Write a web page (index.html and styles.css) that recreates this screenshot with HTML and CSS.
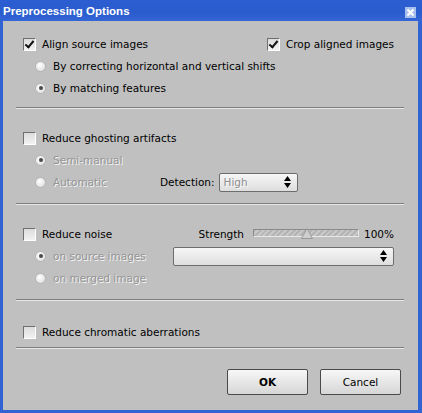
FILE: index.html
```html
<!DOCTYPE html>
<html>

<head>
    <title>Preprocessing Options</title>
    <link rel="stylesheet" href="styles.css">
</head>

<body>
    <div class="window">
        <div class="titlebar">
            <span class="title">Preprocessing Options</span>
            <span class="close">
                <svg width="11" height="11" viewBox="0 0 11 11">
                    <path d="M2.5 2.5 L8.5 8.5 M8.5 2.5 L2.5 8.5" stroke="#fff" stroke-width="2" />
                </svg>
            </span>
        </div>

        <div class="content">
            <!-- align -->
            <div class="section sec-align">
                <div class="row split">
                    <div class="opt"><span class="check checked"></span>Align source images</div>
                    <div class="opt"><span class="check checked"></span>Crop aligned images</div>
                </div>
                <div class="row sub">
                    <div class="opt"><span class="radio"></span>By correcting horizontal and vertical shifts</div>
                </div>
                <div class="row sub">
                    <div class="opt"><span class="radio on"></span>By matching features</div>
                </div>
            </div>
            <div class="sep"></div>

            <!-- ghosting -->
            <div class="section sec-ghost">
                <div class="row">
                    <div class="opt"><span class="check"></span>Reduce ghosting artifacts</div>
                </div>
                <div class="row sub">
                    <div class="opt disabled"><span class="radio on"></span>Semi-manual</div>
                </div>
                <div class="row sub">
                    <div class="opt disabled col-auto"><span class="radio"></span>Automatic</div>
                    <span class="lbl">Detection:</span>
                    <div class="select sel-small">
                        <span class="sel-text">High</span>
                        <svg class="arrows" width="7" height="12" viewBox="0 0 7 12">
                            <path d="M3.5 0 L7 5 L0 5 Z M0 7 L7 7 L3.5 12 Z" fill="#000" />
                        </svg>
                    </div>
                </div>
            </div>
            <div class="sep"></div>

            <!-- noise -->
            <div class="section sec-noise">
                <div class="row">
                    <div class="opt col-noise"><span class="check"></span>Reduce noise</div>
                    <span class="lbl">Strength</span>
                    <div class="slider">
                        <div class="track"></div>
                        <svg class="thumb" width="12" height="11" viewBox="0 0 12 11">
                            <path d="M6 0.5 L11.5 10.5 L0.5 10.5 Z" fill="#cfcfcf" stroke="#9a9a9a" />
                        </svg>
                    </div>
                    <span class="pct">100%</span>
                </div>
                <div class="row sub">
                    <div class="opt disabled col-source"><span class="radio on"></span>on source images</div>
                    <div class="select sel-wide">
                        <span class="sel-text"></span>
                        <svg class="arrows" width="7" height="12" viewBox="0 0 7 12">
                            <path d="M3.5 0 L7 5 L0 5 Z M0 7 L7 7 L3.5 12 Z" fill="#000" />
                        </svg>
                    </div>
                </div>
                <div class="row sub">
                    <div class="opt disabled"><span class="radio"></span>on merged image</div>
                </div>
            </div>
            <div class="sep"></div>

            <!-- chromatic -->
            <div class="section sec-chrom">
                <div class="row">
                    <div class="opt"><span class="check"></span>Reduce chromatic aberrations</div>
                </div>
            </div>
            <div class="sep"></div>

            <div class="buttons">
                <button class="btn btn-ok">OK</button>
                <button class="btn">Cancel</button>
            </div>
        </div>
    </div>
</body>

</html>
```

FILE: styles.css
```css
body {
    margin: 0;
    padding: 0;
    font-family: "DejaVu Sans", sans-serif;
    font-size: 10.5px;
    color: #000;
}

.window {
    width: 422px;
    height: 413px;
    box-sizing: border-box;
    background-color: #c0c0c0;
    border-left: 3px solid #3163d3;
    border-right: 4px solid #3163d3;
    border-bottom: 3px solid #3163d3;
    display: flex;
    flex-direction: column;
}

.titlebar {
    height: 21px;
    margin-left: -3px;
    margin-right: -4px;
    padding: 0 6px 0 3px;
    background: linear-gradient(#2c5ed2, #2a5ccd 60%, #3466d8);
    display: flex;
    align-items: center;
    justify-content: space-between;
}

.title {
    font-family: "Liberation Sans", sans-serif;
    font-weight: bold;
    font-size: 11.5px;
    color: #fff;
}

.close {
    width: 11px;
    height: 11px;
    margin-top: 3px;
    background-color: #a7bfec;
    display: flex;
}

.content {
    padding: 0 14px 0 13px;
    display: flex;
    flex-direction: column;
}

.section {
    padding-left: 7px;
    padding-right: 10px;
}

.sec-align {
    padding-top: 12px;
    padding-bottom: 8px;
}

.sec-ghost {
    padding-top: 18px;
    padding-bottom: 10px;
}

.sec-noise {
    padding-top: 18px;
    padding-bottom: 10px;
}

.sec-chrom {
    padding-top: 20px;
    padding-bottom: 4px;
}

.sep {
    height: 0;
    border-top: 1px solid #7d7d7d;
    border-bottom: 1px solid #e6e6e6;
}

.row {
    height: 22px;
    display: flex;
    align-items: center;
}

.row.split {
    justify-content: space-between;
}

.row.sub {
    padding-left: 12px;
}

.opt {
    display: flex;
    align-items: center;
    white-space: nowrap;
}

.opt.disabled {
    color: #959595;
    text-shadow: 1px 1px 0 #f4f4f4;
}

.col-auto {
    width: 125px;
}

.col-noise {
    width: 179px;
}

.col-source {
    width: 138px;
}

.check {
    width: 11px;
    height: 11px;
    margin-right: 6px;
    border: 1px solid #6f6f6f;
    border-right-color: #fff;
    border-bottom-color: #fff;
    background: linear-gradient(#dcdcdc, #f2f2f2);
    position: relative;
}

.check.checked::after {
    content: "";
    position: absolute;
    left: 3px;
    top: 0px;
    width: 3px;
    height: 7px;
    border-right: 2px solid #111;
    border-bottom: 2px solid #111;
    transform: rotate(40deg);
}

.radio {
    width: 9px;
    height: 9px;
    margin-right: 7px;
    border-radius: 50%;
    border: 1px solid #b4b4b4;
    background: radial-gradient(circle at 40% 35%, #ffffff, #d8d8d8);
    display: flex;
    align-items: center;
    justify-content: center;
}

.radio.on::after {
    content: "";
    width: 4px;
    height: 4px;
    border-radius: 50%;
    background-color: #4a4a4a;
}

.lbl {
    white-space: nowrap;
}

.select {
    box-sizing: border-box;
    height: 19px;
    border: 1px solid #6d6d6d;
    border-radius: 2px;
    background: linear-gradient(#f6f6f6, #dedede);
    display: flex;
    align-items: center;
    justify-content: space-between;
    padding: 0 6px 0 4px;
}

.sel-small {
    width: 79px;
    margin-left: 4px;
}

.sel-wide {
    width: 221px;
}

.sel-text {
    color: #8e8e8e;
    text-shadow: 1px 1px 0 #fafafa;
}

.slider {
    width: 108px;
    height: 14px;
    margin-left: 9px;
    position: relative;
}

.track {
    margin-top: 2px;
    height: 6px;
    border: 1px solid #8a8a8a;
    border-bottom-color: #e8e8e8;
    border-right-color: #e8e8e8;
    background: repeating-linear-gradient(-45deg, #b4b4b4 0, #b4b4b4 2px, #c8c8c8 2px, #c8c8c8 4px);
}

.thumb {
    position: absolute;
    left: 48px;
    top: 1px;
}

.pct {
    margin-left: 5px;
}

.buttons {
    padding-top: 20px;
    padding-right: 3px;
    display: flex;
    justify-content: flex-end;
    gap: 12px;
}

.btn {
    width: 81px;
    height: 26px;
    font-family: "DejaVu Sans", sans-serif;
    font-size: 10.5px;
    color: #000;
    border: 1px solid #4a4a4a;
    border-radius: 2px;
    background: linear-gradient(#f7f7f7, #d6d6d6);
    padding: 0;
}

.btn-ok {
    font-weight: bold;
}
```
